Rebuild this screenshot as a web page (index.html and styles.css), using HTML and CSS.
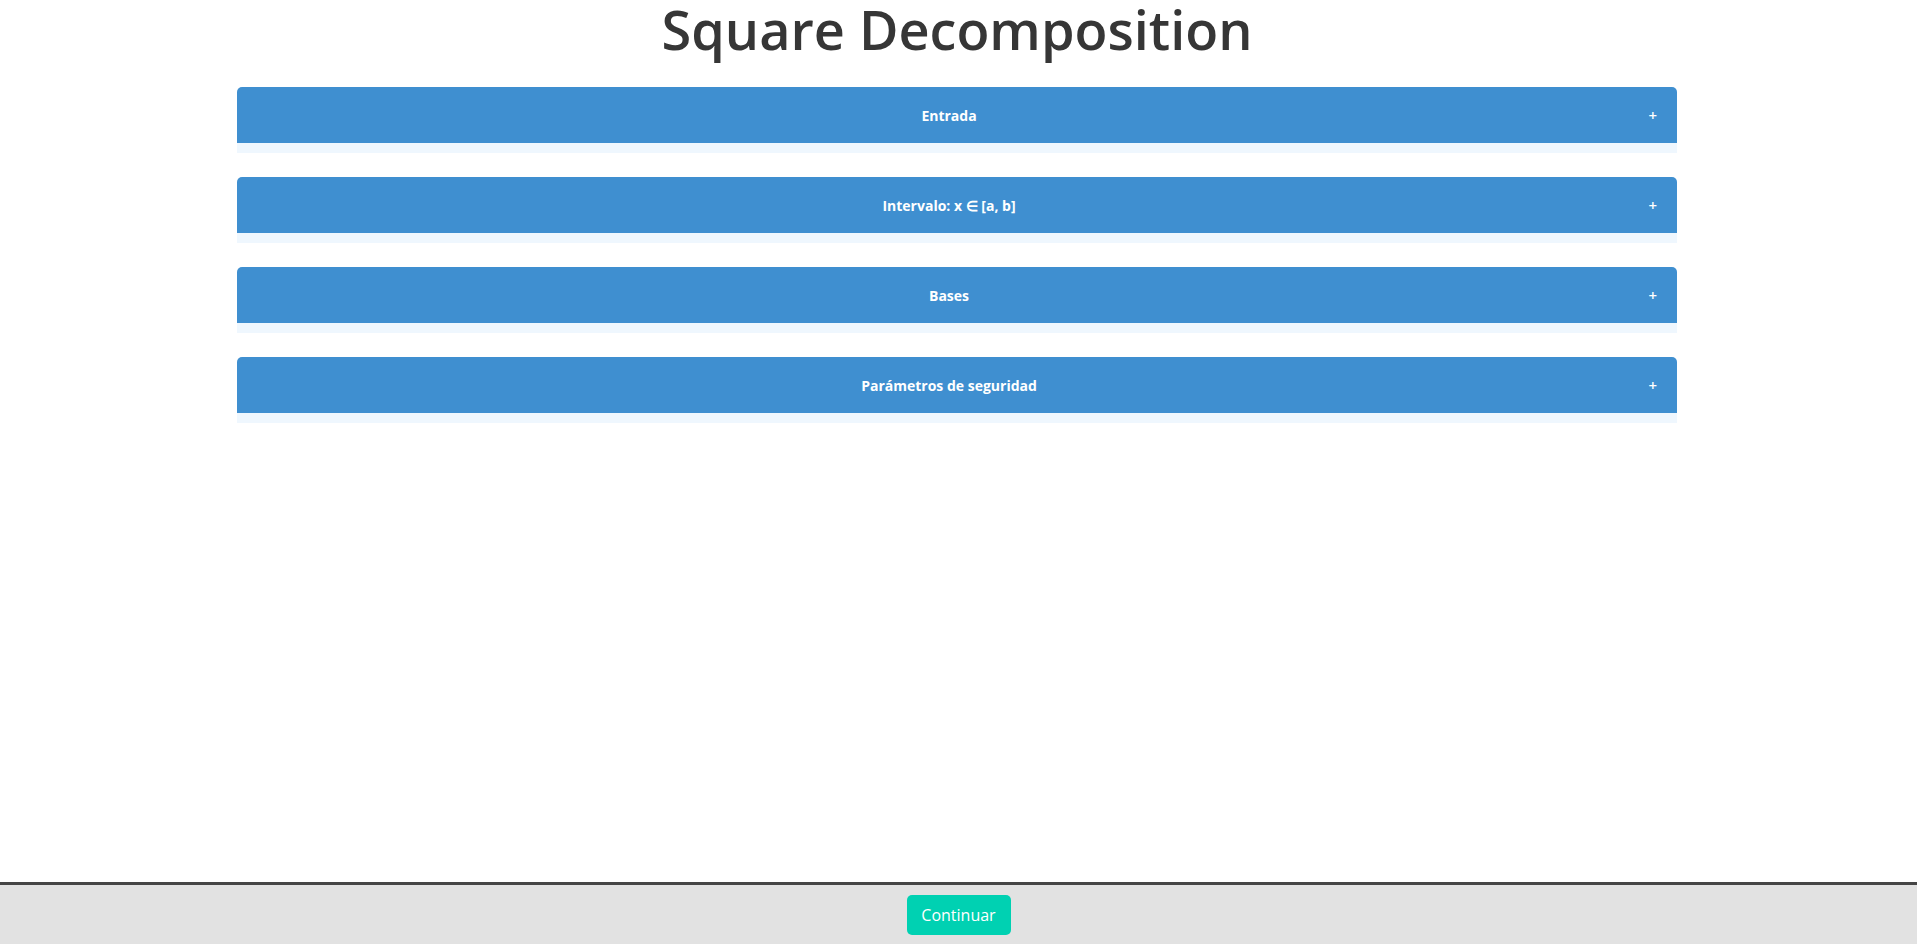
FILE: index.html
```html
<!DOCTYPE html>
<html lang="es">
<head>
<meta charset="utf-8">
<title>Square Decomposition</title>
<link rel="stylesheet" href="styles.css">
</head>
<body>
<div class="page">
  <main class="main">
    <h1 class="title">Square Decomposition</h1>
    <div class="panels">
      <section class="panel">
        <div class="panel-head"><span class="panel-title">Entrada</span><span class="panel-toggle">+</span></div>
        <div class="panel-body"></div>
      </section>
      <section class="panel">
        <div class="panel-head"><span class="panel-title">Intervalo: x ∈ [a, b]</span><span class="panel-toggle">+</span></div>
        <div class="panel-body"></div>
      </section>
      <section class="panel">
        <div class="panel-head"><span class="panel-title">Bases</span><span class="panel-toggle">+</span></div>
        <div class="panel-body"></div>
      </section>
      <section class="panel">
        <div class="panel-head"><span class="panel-title">Parámetros de seguridad</span><span class="panel-toggle">+</span></div>
        <div class="panel-body"></div>
      </section>
    </div>
  </main>
  <footer class="footer">
    <button class="btn-continue" type="button">Continuar</button>
  </footer>
</div>
</body>
</html>
```
FILE: styles.css
```css
* { box-sizing: border-box; }
html, body { margin: 0; padding: 0; height: 100%; }
body {
  font-family: "Open Sans", "Noto Sans", "Liberation Sans", sans-serif;
  color: #363636;
  background: #ffffff;
}
.page {
  min-height: 100vh;
  display: flex;
  flex-direction: column;
}
.main {
  flex: 1;
  display: flex;
  flex-direction: column;
  align-items: center;
  padding-right: 3px;
}
.title {
  margin: 0 0 29px;
  font-size: 54px;
  font-weight: 600;
  line-height: 58px;
  color: #363636;
  white-space: nowrap;
}
.panels {
  width: 1440px;
  display: flex;
  flex-direction: column;
  gap: 24px;
}
.panel-head {
  height: 56px;
  background: #3f8fd0;
  border-radius: 5px 5px 0 0;
  display: flex;
  align-items: center;
  padding: 0 20px;
  color: #ffffff;
}
.panel-title {
  flex: 1;
  text-align: center;
  font-weight: 700;
  font-size: 14px;
}
.panel-toggle {
  width: 16px;
  text-align: right;
  font-size: 15px;
  font-weight: 600;
}
.panel-body {
  height: 10px;
  background: #eff7fe;
}
.footer {
  height: 62px;
  background: #e2e2e2;
  border-top: 3px solid #454545;
  display: flex;
  justify-content: center;
  padding-top: 10px;
}
.btn-continue {
  width: 104px;
  height: 40px;
  border: none;
  border-radius: 5px;
  background: #00d1b2;
  color: #ffffff;
  font-family: "Open Sans", "Noto Sans", sans-serif;
  font-size: 16px;
  padding: 0;
  cursor: pointer;
}
```
